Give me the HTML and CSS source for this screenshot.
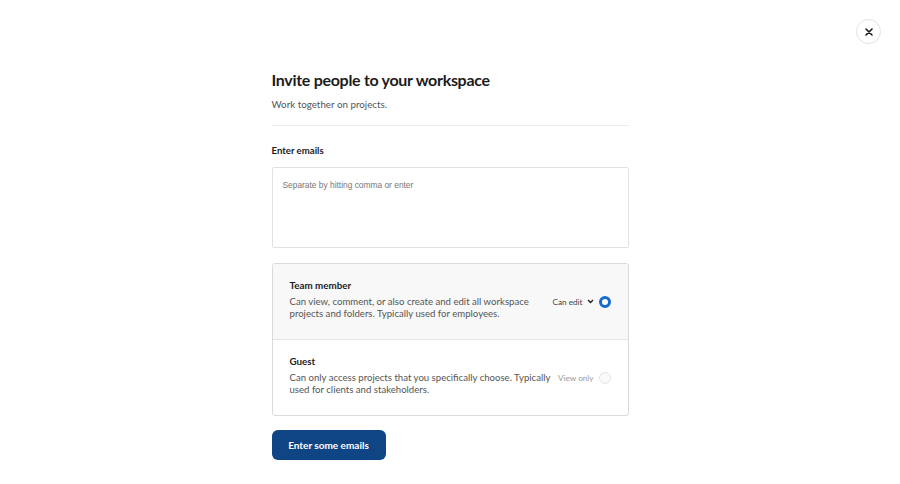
FILE: index.html
```html
<!DOCTYPE html>
<html>
<head>
<meta charset="utf-8">
<link rel="stylesheet" href="styles.css">
</head>
<body>
<div class="page">
  <button class="close" aria-label="Close">
    <svg width="8" height="8" viewBox="0 0 8 8"><path d="M1 1L7 7M7 1L1 7" stroke="#1a1a1a" stroke-width="1.6" stroke-linecap="round"/></svg>
  </button>
  <main class="content">
    <h1 class="title">Invite people to your workspace</h1>
    <p class="subtitle">Work together on projects.</p>
    <hr class="divider">
    <label class="label">Enter emails</label>
    <div class="emails">Separate by hitting comma or enter</div>
    <div class="roles">
      <div class="role role-active">
        <div class="role-text">
          <div class="role-name">Team member</div>
          <div class="role-desc">Can view, comment, or also create and edit all workspace<br>projects and folders. Typically used for employees.</div>
        </div>
        <div class="role-ctrl">
          <span class="perm">Can edit</span>
          <svg class="chev" width="7" height="5" viewBox="0 0 7 5"><path d="M1 1L3.5 3.5L6 1" fill="none" stroke="#222" stroke-width="1.4"/></svg>
          <span class="radio radio-on"></span>
        </div>
      </div>
      <div class="role">
        <div class="role-text">
          <div class="role-name">Guest</div>
          <div class="role-desc">Can only access projects that you specifically choose. Typically<br>used for clients and stakeholders.</div>
        </div>
        <div class="role-ctrl">
          <span class="perm perm-muted">View only</span>
          <span class="radio radio-off"></span>
        </div>
      </div>
    </div>
    <button class="submit">Enter some emails</button>
  </main>
</div>
</body>
</html>
```
FILE: styles.css
```css
* { box-sizing: border-box; }
html, body { margin: 0; padding: 0; background: #fff; }
body { font-family: Lato, "Noto Sans", sans-serif; color: #1c1c1c; }
.page { width: 900px; height: 484px; position: relative; }
.close {
  position: absolute; top: 19px; right: 19px;
  width: 25px; height: 25px; border-radius: 50%;
  border: 1px solid #e3e3e3; background: #fff;
  display: flex; align-items: center; justify-content: center; padding: 0;
}
.content { width: 357px; margin: 0 auto; padding-top: 70px; display: flex; flex-direction: column; }
.title { font-size: 16px; font-weight: 700; margin: 0; line-height: 20px; letter-spacing: -0.3px; }
.subtitle { font-size: 9.8px; color: #555; margin: 7px 0 0; line-height: 14px; }
.divider { border: 0; border-top: 1px solid #ebebeb; margin: 14px 0 0; }
.label { font-size: 9.6px; font-weight: 700; margin-top: 18px; line-height: 13px; }
.emails {
  margin-top: 10px; height: 81px; border: 1px solid #e2e2e2; border-radius: 2px;
  font-family: "Liberation Sans", Arial, sans-serif; font-size: 8.4px; color: #777;
  padding: 12px 10px;
}
.roles { margin-top: 15px; border: 1px solid #dadada; border-radius: 3px; overflow: hidden; }
.role { display: flex; align-items: center; padding: 0 17px; height: 75px; }
.role + .role { border-top: 1px solid #e6e6e6; height: 76px; }
.role-active { background: #f8f8f8; }
.role-text { flex: 1; min-width: 0; padding-bottom: 4px; }
.role-name { font-size: 9.8px; font-weight: 700; line-height: 13px; }
.role-desc { font-size: 9.6px; color: #555; line-height: 12.5px; margin-top: 4px; white-space: nowrap; }
.role-ctrl { display: flex; align-items: center; flex-shrink: 0; }
.perm { font-size: 8.2px; color: #444; }
.perm-muted { color: #999; }
.chev { margin-left: 4px; }
.radio { width: 12px; height: 12px; border-radius: 50%; margin-left: 5px; }
.radio-on { background: #fff; border: 3.5px solid #1769d2; }
.radio-off { border: 1px solid #e4e4e4; background: #fafafa; }
.submit {
  margin-top: 14px; align-self: flex-start; width: 114px; height: 30px;
  background: #0f4584; color: #fff; border: 0; border-radius: 6px;
  font-family: Lato, "Noto Sans", sans-serif; font-size: 10px; font-weight: 700;
}
```
